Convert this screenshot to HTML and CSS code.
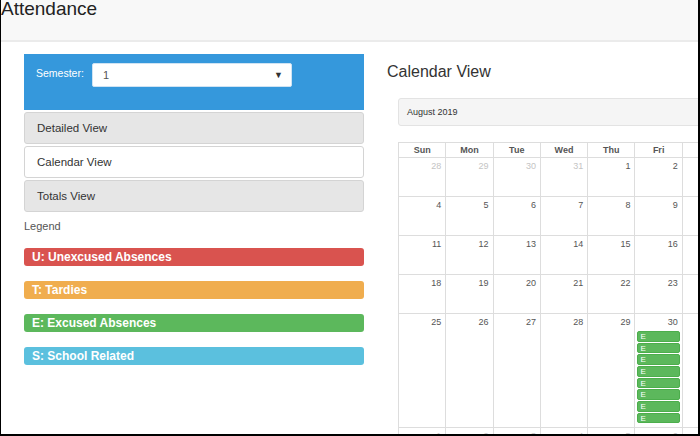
FILE: index.html
```html
<!DOCTYPE html>
<html lang="en">
<head>
    <meta charset="UTF-8">
    <title>Attendance</title>
    <link rel="stylesheet" href="styles.css">
</head>
<body>
    <div class="frame">
        <div class="header">
            <h1>Attendance</h1>
        </div>

        <div class="main">
            <div class="left">
                <div class="semester-panel">
                    <label>Semester:</label>
                    <div class="select">
                        <span>1</span>
                        <span class="arrow">&#9660;</span>
                    </div>
                </div>

                <div class="tab">Detailed View</div>
                <div class="tab active">Calendar View</div>
                <div class="tab">Totals View</div>

                <div class="legend-title">Legend</div>
                <div class="legend-item red">U: Unexcused Absences</div>
                <div class="legend-item orange">T: Tardies</div>
                <div class="legend-item green">E: Excused Absences</div>
                <div class="legend-item blue">S: School Related</div>
            </div>

            <div class="right">
                <h2>Calendar View</h2>
                <div class="month-bar">August 2019</div>

                <div class="calendar">
                    <div class="dow">Sun</div>
                    <div class="dow">Mon</div>
                    <div class="dow">Tue</div>
                    <div class="dow">Wed</div>
                    <div class="dow">Thu</div>
                    <div class="dow">Fri</div>
                    <div class="dow">Sat</div>

                    <div class="day other">28</div>
                    <div class="day other">29</div>
                    <div class="day other">30</div>
                    <div class="day other">31</div>
                    <div class="day">1</div>
                    <div class="day">2</div>
                    <div class="day">3</div>

                    <div class="day">4</div>
                    <div class="day">5</div>
                    <div class="day">6</div>
                    <div class="day">7</div>
                    <div class="day">8</div>
                    <div class="day">9</div>
                    <div class="day">10</div>

                    <div class="day">11</div>
                    <div class="day">12</div>
                    <div class="day">13</div>
                    <div class="day">14</div>
                    <div class="day">15</div>
                    <div class="day">16</div>
                    <div class="day">17</div>

                    <div class="day">18</div>
                    <div class="day">19</div>
                    <div class="day">20</div>
                    <div class="day">21</div>
                    <div class="day">22</div>
                    <div class="day">23</div>
                    <div class="day">24</div>

                    <div class="day">25</div>
                    <div class="day">26</div>
                    <div class="day">27</div>
                    <div class="day">28</div>
                    <div class="day">29</div>
                    <div class="day">30
                        <div class="events">
                            <div class="event">E</div>
                            <div class="event">E</div>
                            <div class="event">E</div>
                            <div class="event">E</div>
                            <div class="event">E</div>
                            <div class="event">E</div>
                            <div class="event">E</div>
                            <div class="event">E</div>
                        </div>
                    </div>
                    <div class="day">31</div>

                    <div class="day other">1</div>
                    <div class="day other">2</div>
                    <div class="day other">3</div>
                    <div class="day other">4</div>
                    <div class="day other">5</div>
                    <div class="day other">6</div>
                    <div class="day other">7</div>
                </div>
            </div>
        </div>
    </div>
</body>
</html>
```

FILE: styles.css
```css
* {
    box-sizing: border-box;
    margin: 0;
    padding: 0;
}

body {
    font-family: "Liberation Sans", Arial, sans-serif;
    color: #333;
    background: #fff;
}

.frame {
    width: 700px;
    height: 436px;
    border-left: 1px solid #000;
    border-right: 2px solid #000;
    border-bottom: 2px solid #000;
    overflow: hidden;
}

.header {
    height: 43px;
    background: #f8f8f8;
    border-bottom: 2px solid #ebebeb;
}

.header h1 {
    font-size: 19px;
    font-weight: normal;
    line-height: 19px;
    color: #222;
    margin-top: -1px;
}

.main {
    display: flex;
    gap: 23px;
    padding: 12px 0 0 23px;
}

.left {
    width: 340px;
    flex-shrink: 0;
}

.semester-panel {
    display: flex;
    align-items: flex-start;
    height: 56px;
    padding: 9px 12px;
    background: #3598dc;
}

.semester-panel label {
    width: 56px;
    padding-top: 4px;
    font-size: 10.5px;
    color: #fff;
}

.select {
    display: flex;
    justify-content: space-between;
    align-items: center;
    width: 200px;
    height: 24px;
    padding: 0 8px 0 10px;
    background: #fff;
    border: 1px solid #cfe3f3;
    border-radius: 2px;
    font-size: 11px;
    color: #555;
}

.select .arrow {
    font-size: 9px;
    color: #333;
}

.tab {
    height: 32px;
    margin-top: 2px;
    padding: 0 12px;
    display: flex;
    align-items: center;
    font-size: 11.5px;
    color: #333;
    background: #e6e6e6;
    border: 1px solid #d4d4d4;
    border-radius: 3px;
}

.tab:first-of-type {
    margin-top: 1px;
}

.tab.active {
    background: #fff;
}

.legend-title {
    margin-top: 8px;
    font-size: 11px;
    line-height: 13px;
    color: #555;
}

.legend-item {
    height: 18px;
    margin-top: 15px;
    padding-left: 8px;
    font-size: 12px;
    font-weight: bold;
    line-height: 18px;
    color: #fff;
    border-radius: 3px;
}

.legend-item.red {
    background: #d9534f;
}

.legend-item.orange {
    background: #f0ad4e;
}

.legend-item.green {
    background: #5cb85c;
}

.legend-item.blue {
    background: #5bc0de;
}

.right {
    flex: 1;
    min-width: 0;
    overflow: hidden;
}

.right h2 {
    margin-top: 8px;
    font-size: 16px;
    font-weight: normal;
    line-height: 20px;
    color: #333;
}

.month-bar {
    width: 331px;
    height: 28px;
    margin: 16px 0 0 11px;
    padding-left: 8px;
    display: flex;
    align-items: center;
    font-size: 9px;
    background: #f5f5f5;
    border: 1px solid #e3e3e3;
    border-radius: 3px;
}

.calendar {
    display: grid;
    grid-template-columns: repeat(7, 47.3px);
    grid-template-rows: 15px 39px 39px 39px 39px 114px 39px;
    width: 331px;
    margin: 16px 0 0 11px;
    border-top: 1px solid #ddd;
    border-left: 1px solid #ddd;
}

.dow {
    font-size: 9px;
    font-weight: bold;
    line-height: 14px;
    text-align: center;
    color: #555;
    border-right: 1px solid #ddd;
    border-bottom: 1px solid #ddd;
}

.day {
    padding: 3px 4px 0 0;
    font-size: 9px;
    line-height: 11px;
    text-align: right;
    color: #555;
    border-right: 1px solid #ddd;
    border-bottom: 1px solid #ddd;
}

.day.other {
    color: #c4c4c4;
}

.events {
    margin: 3px -2px 0 2px;
}

.event {
    height: 10.5px;
    margin-bottom: 1.2px;
    padding-left: 2px;
    font-size: 8px;
    line-height: 9px;
    text-align: left;
    color: #fff;
    background: #5cb85c;
    border: 1px solid #4cae4c;
    border-radius: 2px;
}
```
